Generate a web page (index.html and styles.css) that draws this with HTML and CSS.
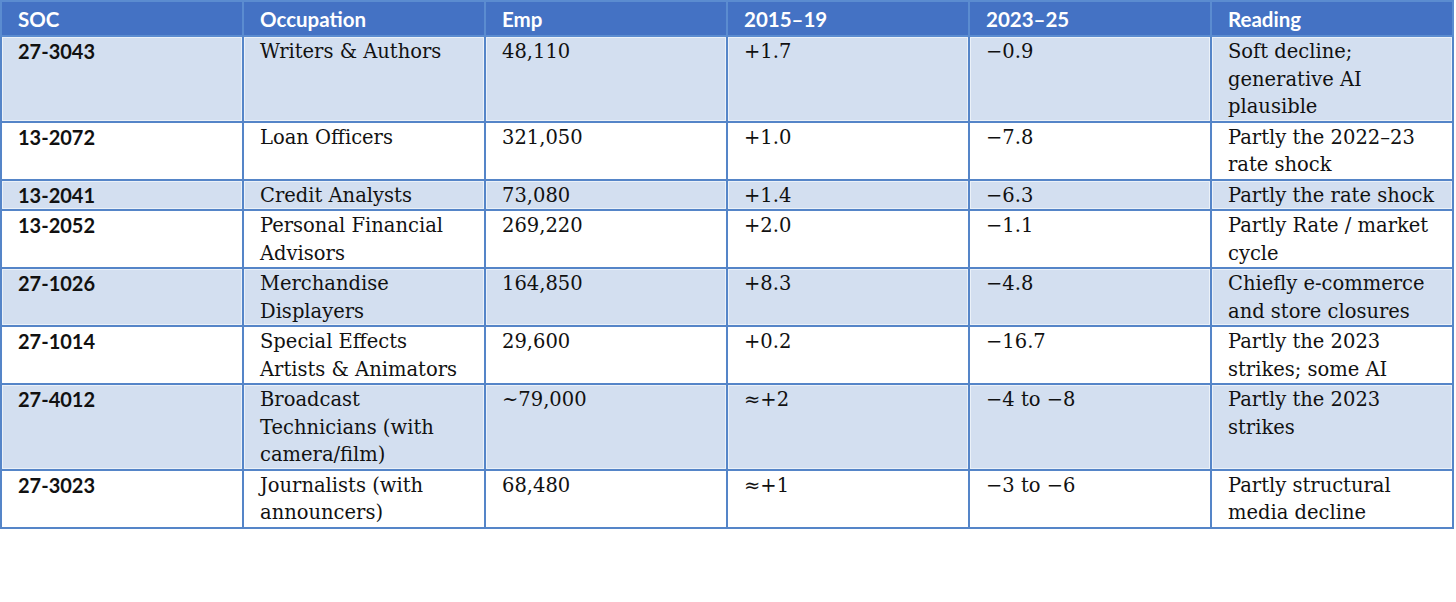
FILE: index.html
```html
<!DOCTYPE html>
<html lang="en">
<head>
<meta charset="utf-8">
<title>Occupations table</title>
<link rel="stylesheet" href="styles.css">
</head>
<body>
<table class="data">
  <colgroup>
    <col class="c"><col class="c"><col class="c"><col class="c"><col class="c"><col class="c">
  </colgroup>
  <thead>
    <tr>
      <th>SOC</th><th>Occupation</th><th>Emp</th><th>2015–19</th><th>2023–25</th><th>Reading</th>
    </tr>
  </thead>
  <tbody>
    <tr class="shade">
      <td class="soc">27-3043</td><td>Writers &amp; Authors</td><td>48,110</td><td>+1.7</td><td>−0.9</td><td>Soft decline;<br>generative AI<br>plausible</td>
    </tr>
    <tr>
      <td class="soc">13-2072</td><td>Loan Officers</td><td>321,050</td><td>+1.0</td><td>−7.8</td><td>Partly the 2022–23<br>rate shock</td>
    </tr>
    <tr class="shade">
      <td class="soc">13-2041</td><td>Credit Analysts</td><td>73,080</td><td>+1.4</td><td>−6.3</td><td>Partly the rate shock</td>
    </tr>
    <tr>
      <td class="soc">13-2052</td><td>Personal Financial<br>Advisors</td><td>269,220</td><td>+2.0</td><td>−1.1</td><td>Partly Rate / market<br>cycle</td>
    </tr>
    <tr class="shade">
      <td class="soc">27-1026</td><td>Merchandise<br>Displayers</td><td>164,850</td><td>+8.3</td><td>−4.8</td><td>Chiefly e-commerce<br>and store closures</td>
    </tr>
    <tr>
      <td class="soc">27-1014</td><td>Special Effects<br>Artists &amp; Animators</td><td>29,600</td><td>+0.2</td><td>−16.7</td><td>Partly the 2023<br>strikes; some AI</td>
    </tr>
    <tr class="shade">
      <td class="soc">27-4012</td><td>Broadcast<br>Technicians (with<br>camera/film)</td><td>~79,000</td><td>≈+2</td><td>−4 to −8</td><td>Partly the 2023<br>strikes</td>
    </tr>
    <tr>
      <td class="soc">27-3023</td><td>Journalists (with<br>announcers)</td><td>68,480</td><td>≈+1</td><td>−3 to −6</td><td>Partly structural<br>media decline</td>
    </tr>
  </tbody>
</table>
</body>
</html>
```

FILE: styles.css
```css
html, body {
  margin: 0;
  padding: 0;
  background: #ffffff;
}

.data {
  width: 1452px;
  table-layout: fixed;
  border-collapse: collapse;
  border: 2px solid #5585c8;
  font-family: "DejaVu Serif", "Liberation Serif", serif;
  color: #111111;
}

.data .c {
  width: 242px;
}

.data th {
  background: #4472c4;
  color: #ffffff;
  font-family: Lato, "Open Sans", sans-serif;
  font-weight: 700;
  font-size: 20.5px;
  line-height: 28px;
  text-align: left;
  padding: 3px 8px 2px 16px;
  border: 2px solid #5b8cd0;
  vertical-align: top;
}

.data td {
  font-size: 19.5px;
  line-height: 27.5px;
  padding: 1px 4px 0 16px;
  border: 2px solid #5585c8;
  vertical-align: top;
  white-space: nowrap;
  box-shadow: inset 0 0 0 1px rgba(255, 255, 255, 0.55);
}

.data td.soc {
  font-family: Lato, "Open Sans", sans-serif;
  font-weight: 700;
  font-size: 20px;
}

.data tr.shade td {
  background: #d3dff0;
}
```
